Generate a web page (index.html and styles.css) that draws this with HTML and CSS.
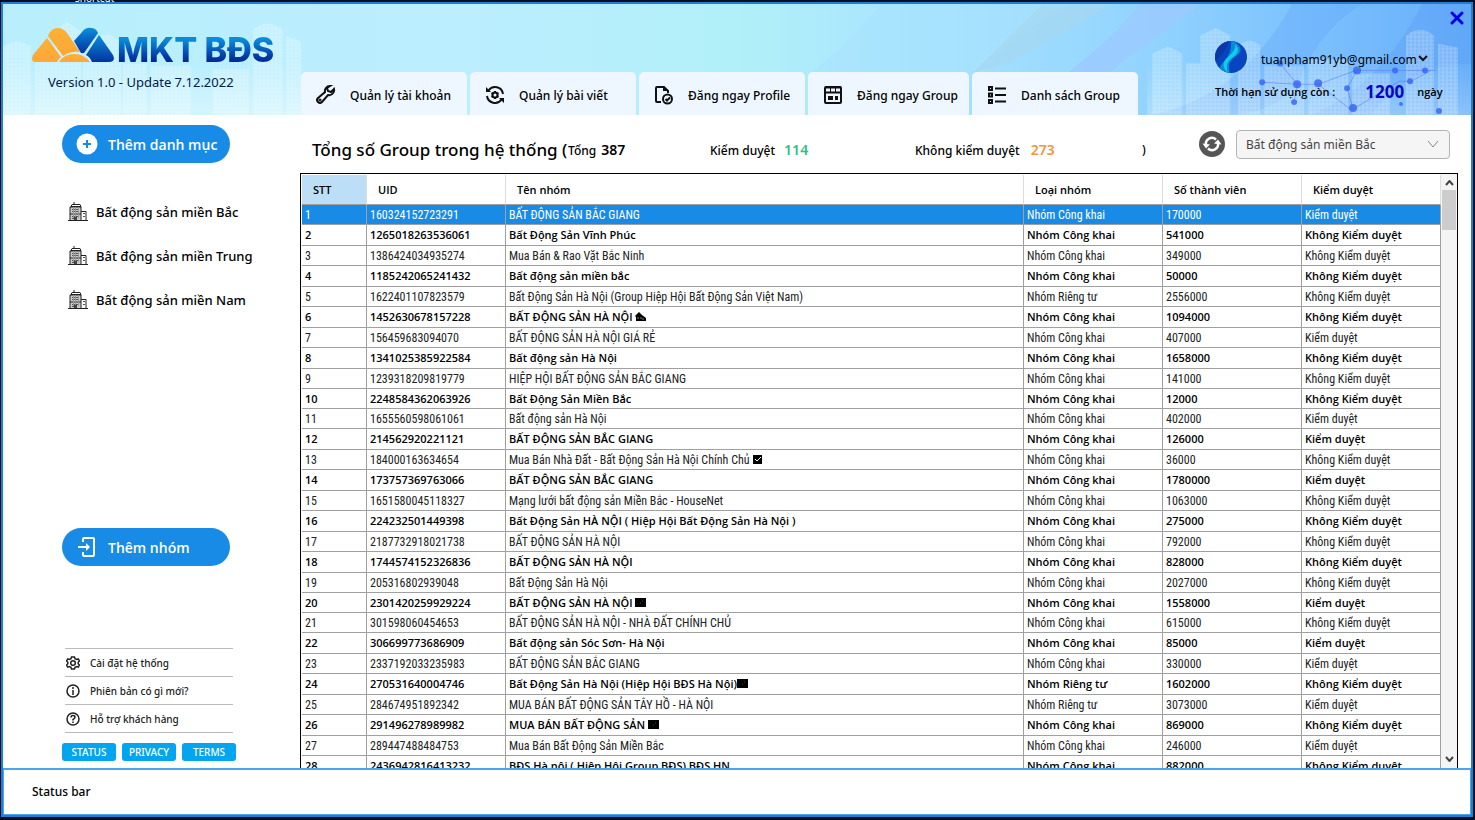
FILE: index.html
```html
<!DOCTYPE html>
<html lang="vi">
<head>
    <meta charset="UTF-8">
    <meta name="viewport" content="width=device-width, initial-scale=1.0">
    <title>MKT BĐS</title>
    <link rel="stylesheet" href="styles.css">
</head>
<body>
    <div class="desktop_label">shortcut</div>

    <div class="window">
        <!-- header -->
        <header class="header">
            <svg class="header_back" viewBox="0 0 1469 112" preserveAspectRatio="none" aria-hidden="true">
                <defs>
                    <linearGradient id="sky"><stop offset="0" stop-color="#b9effd"/><stop offset=".32" stop-color="#bbeeff"/><stop offset=".5" stop-color="#b1f0f8"/><stop offset=".62" stop-color="#a9e4ff"/><stop offset=".78" stop-color="#92d4ff"/><stop offset="1" stop-color="#66aefa"/></linearGradient>
                    <pattern id="floors" width="4" height="4" patternUnits="userSpaceOnUse"><rect width="4" height="4" fill="#fff" opacity=".25"/><path d="M0 1h4M1 0v4" stroke="#fff" opacity=".5"/></pattern>
                    <linearGradient id="mist" x2="0" y2="1"><stop offset="0" stop-color="#fff" stop-opacity="0"/><stop offset="1" stop-color="#fff" stop-opacity=".4"/></linearGradient>
                </defs>
                <rect width="1469" height="112" fill="url(#sky)"/>
                <path d="M880 0 835 48l-25 20v44h140q50-80 120-112z" fill="#a8e2fd" opacity=".6"/>
                <path d="M1040 0h70L1010 58l-40 12z" fill="#a5d7f0" opacity=".7"/>
                <path d="M1138 0h60l-80 60-60 52h-40l50-45q40-30 70-67z" fill="#9cc9ff" opacity=".8"/>
                <path d="M1290 0h70q-40 25-60 70t-90 42h-60q90-20 140-112z" fill="#5f9ffc" opacity=".28"/>
                <path d="M1420 0h49v60q-60 0-100 52h-60q70-30 111-112z" fill="#5799f6" opacity=".3"/>
                <g fill="url(#floors)" opacity=".55">
                    <path d="M0 112V42l15-5 13 5v70zM32 112V54h18V28l14-10 14 10v84zM80 112V50h10V36l16-6 12 8v74zM120 112V60h24v52zM148 112V62h40v50zM210 112V66h36v46zM250 112V26q14-12 30 0v86zM283 112V32l15 6v74z"/>
                    <path d="M1150 112V50l16-7 14 7v62zM1184 112V60h14V32l16-8 14 8v80zM1236 112V42q12-10 22 0v70zM1262 112V62h40v50zM1306 112V56h40v56zM1350 112V70h38v42zM1404 112V32q14-12 28 0v80zM1436 112V40l20 4v68z"/>
                </g>
                <rect y="60" width="300" height="52" fill="url(#mist)"/>
                <rect x="1145" y="60" width="324" height="52" fill="url(#mist)" opacity=".6"/>
                <g stroke="#5a6cf0" stroke-width="1" opacity=".5" fill="none"><path d="m1260 79 35 2 21 0 38-14 38 0 42 0M1278 60l17 21-3 18M1355 67l-10 18 6 21 46-28 12 0 20-11M1316 81l32 25"/></g>
                <g fill="#3563f2" opacity=".8"><circle cx="1260" cy="79" r="3"/><circle cx="1278" cy="60" r="3"/><circle cx="1295" cy="81" r="4"/><circle cx="1292" cy="99" r="3"/><circle cx="1316" cy="80" r="4"/><circle cx="1355" cy="67" r="4"/><circle cx="1345" cy="85" r="3"/><circle cx="1351" cy="105" r="4"/><circle cx="1393" cy="67" r="3"/><circle cx="1423" cy="67" r="3"/><circle cx="1408" cy="78" r="3"/><circle cx="1399" cy="101" r="2"/><circle cx="1437" cy="108" r="3"/></g>
            </svg>

            <div class="brand">
                <div class="logo">
                    <svg width="84" height="36" viewBox="0 0 84 36" aria-hidden="true">
                        <defs>
                            <linearGradient id="orange" x2="0" y2="1"><stop offset="0" stop-color="#f9b233"/><stop offset="1" stop-color="#ffa63a"/></linearGradient>
                            <linearGradient id="blue" x2="0" y2="1"><stop offset="0" stop-color="#0c8fdb"/><stop offset="1" stop-color="#0233a0"/></linearGradient>
                        </defs>
                        <path d="M16 11 2 28q-3 7 3 7h21q1-3 4-5z" fill="url(#orange)"/>
                        <path d="M17 9q3-8 10-8 5 0 9 5l13 19q-9-1-17 4z" fill="url(#orange)"/>
                        <path d="M28 35q5-8 15-8t16 8z" fill="url(#orange)"/>
                        <path d="M43 14 51 5q4-5 9-4 5 0 7 5L53 26h-3z" fill="url(#blue)"/>
                        <path d="m68 8 14 20q3 7-4 7H61q-2-5-6-7z" fill="url(#blue)"/>
                    </svg>
                    <span class="logo_text">MKT BĐS</span>
                </div>
                <p class="version">Version 1.0 - Update 7.12.2022</p>
            </div>

            <nav class="tabs">
                <a class="tab" href="#">
                    <svg class="icon20" viewBox="0 0 20 20"><path d="M14 2a5 5 0 0 0-5 6L2 14a2.600 2.600 0 0 0 4 4l6-7a5 5 0 0 0 6-6l-3 3-3-1-1-3z" transform="translate(0 -1)"/><circle cx="4" cy="15" r=".6"/></svg>
                    Quản lý tài khoản
                </a>
                <a class="tab" href="#">
                    <svg class="icon20" viewBox="0 0 20 20"><path d="M3.500 5.500a8 8 0 0 1 14.500 3.500M16.500 14.500a8 8 0 0 1-14.500-3.500"/><path d="M1 2v5h5zM19 18v-5h-5z" fill="#111" stroke="none"/><circle cx="10" cy="10" r="2.500"/><path d="M10 6v1M10 13v1M6.500 8l1 .5M12.500 11.500l1 .5M6.500 12l1-.5M12.500 8.500l1-.5"/></svg>
                    Quản lý bài viết
                </a>
                <a class="tab" href="#">
                    <svg class="icon20" viewBox="0 0 20 20"><path d="M7 17H3q-1 0-1-1V3q0-1 1-1h7l4 4v2"/><path d="M9 1v5h6z" fill="#111" stroke="none"/><circle cx="13.500" cy="14" r="4.500"/><path d="m11.500 14 1.500 1.500 3-3"/></svg>
                    Đăng ngay Profile
                </a>
                <a class="tab" href="#">
                    <svg class="icon20" viewBox="0 0 20 20"><rect x="2" y="2" width="16" height="16" rx="1"/><path d="M2 7.500h16M2 2.500h16"/><path d="M7.500 3v4M12.500 3v4" stroke-width="1"/><path d="M5 11h5v4H5zM12 11h3v4h-3z" fill="#111" stroke="none"/></svg>
                    Đăng ngay Group
                </a>
                <a class="tab" href="#">
                    <svg class="icon20" viewBox="0 0 20 20"><path d="M2 2h3v3H2zM2 8.500h3v3H2zM2 15h3v3H2zM8 3.500h11M8 10h11M8 16.500h11"/></svg>
                    Danh sách Group
                </a>
            </nav>

            <div class="account">
                <button class="close" aria-label="Close">
                    <svg width="16" height="16" viewBox="0 0 16 16"><path d="m3 3 10 10M13 3 3 13" stroke="#0202e6" stroke-width="3" stroke-linecap="round"/></svg>
                </button>
                <div class="user">
                    <svg width="32" height="32" viewBox="0 0 32 32" aria-hidden="true">
                        <defs><clipPath id="round"><circle cx="16" cy="16" r="16"/></clipPath></defs>
                        <g clip-path="url(#round)"><path d="M0 0h32v32H0z" fill="#0645bd"/><path d="M16-2q16 10 5 17t-5 19H4q-1-8 6-15t6-21z" fill="#078ad7"/><path d="M20 3q7 7-2 13t-5 16q-9-8 0-16T20 3z" fill="#10ccea"/><path d="M0 0h14q-4 10-8 14t-6 8z" fill="#0b37a8"/></g>
                    </svg>
                    <button class="email">tuanpham91yb@gmail.com<svg width="12" height="8" viewBox="0 0 12 8"><path d="m2 1 4 4 4-4" fill="none" stroke="#111" stroke-width="2"/></svg></button>
                </div>
                <p class="expiry"><span>Thời hạn sử dụng còn :</span><b>1200</b><span>ngày</span></p>
            </div>
        </header>

        <div class="main">
            <!-- sidebar -->
            <aside class="sidebar">
                <button class="pill">
                    <svg width="22" height="22" viewBox="0 0 22 22"><circle cx="11" cy="11" r="10.500" fill="#fff"/><path d="M11 7v8M7 11h8" stroke="#188be6" stroke-width="2"/></svg>
                    Thêm danh mục
                </button>
                <svg class="symbols" aria-hidden="true">
                    <symbol id="building" viewBox="0 0 20 20"><path d="M2 4h11v14H2z" fill="#ccc"/><path d="M2 18V5h11v13M3 4.500l1-2h8l1 2zM6 3V0M13 9.500h5V18M0 18.500h20" fill="none" stroke="#222"/><path d="M4 7.500h7M4 9.500h7M4 14.500h7M4 16.500h2M15 11.500h2M15 14.500h2" stroke="#555"/><path d="M2 12h11" stroke="#222"/><path d="M5.500 5v11M7.500 5v11M10.500 5v11" stroke="#999"/><path d="M6 15h3v3H6z" fill="#444"/></symbol>
                </svg>
                <ul class="areas">
                    <li><a href="#"><svg width="20" height="20"><use href="#building"/></svg>Bất động sản miền Bắc</a></li>
                    <li><a href="#"><svg width="20" height="20"><use href="#building"/></svg>Bất động sản miền Trung</a></li>
                    <li><a href="#"><svg width="20" height="20"><use href="#building"/></svg>Bất động sản miền Nam</a></li>
                </ul>
                <button class="pill add_group">
                    <svg width="22" height="22" viewBox="0 0 22 22"><path d="M7 6V3q0-1 1-1h9q1 0 1 1v16q0 1-1 1H8q-1 0-1-1v-3M2 11h11" fill="none" stroke="#fff" stroke-width="2"/><path d="m10 7 4 4-4 4z" fill="#fff"/></svg>
                    Thêm nhóm
                </button>
                <ul class="links">
                    <li><a href="#"><svg width="14" height="14" viewBox="0 0 14 14"><path d="m5.500 1-.5 1.700-1.700.8-1.600-.5L.6 5l1.200 1.200v1.600L.6 9l1.100 2 1.600-.5 1.700.8.5 1.700h3l.5-1.700 1.700-.8 1.600.5 1.100-2-1.200-1.200V6.200L13.400 5l-1.100-2-1.600.5L9 2.700 8.500 1z"/><circle cx="7" cy="7" r="2.300"/></svg>Cài đặt hệ thống</a></li>
                    <li><a href="#"><svg width="14" height="14" viewBox="0 0 14 14"><circle cx="7" cy="7" r="6"/><path d="M7 6v5M7 3v2"/></svg>Phiên bản có gì mới?</a></li>
                    <li><a href="#"><svg width="14" height="14" viewBox="0 0 14 14"><circle cx="7" cy="7" r="6"/><path d="M5 5.500q0-2 2-2t2 1.700Q9 6.500 7 7.500v1M7 9.500v1.500"/></svg>Hỗ trợ khách hàng</a></li>
                </ul>
                <div class="badges">
                    <button>STATUS</button>
                    <button>PRIVACY</button>
                    <button>TERMS</button>
                </div>
            </aside>

            <!-- group list -->
            <section class="content">
                <div class="summary">
                    <h1>Tổng số Group trong hệ thống (</h1>
                    <p class="total">Tổng <b>387</b></p>
                    <p class="approve">Kiểm duyệt <b class="green">114</b></p>
                    <p class="no_approve">Không kiểm duyệt <b class="orange">273</b></p>
                    <p class="paren">)</p>
                    <button class="reload" aria-label="Reload">
                        <svg width="26" height="26" viewBox="0 0 26 26"><circle cx="13" cy="13" r="13" fill="#555"/><path d="M7 14a6 6 0 0 1 10-5.500M19 12a6 6 0 0 1-10 5.500" fill="none" stroke="#fff" stroke-width="2.500"/><path d="m3.500 12.500 3.500 5 4-4zM22.500 13.500 19 8.500l-4 4z" fill="#fff"/></svg>
                    </button>
                    <div class="select_box">
                        <select aria-label="Danh mục">
                            <option>Bất động sản miền Bắc</option>
                            <option>Bất động sản miền Trung</option>
                            <option>Bất động sản miền Nam</option>
                        </select>
                        <svg width="12" height="8" viewBox="0 0 12 8"><path d="m1 1 5 6 5-6" fill="none" stroke="#888"/></svg>
                    </div>
                </div>

                <div class="grid">
                    <div class="grid_body">
                        <table>
                            <colgroup><col class="c_stt"><col class="c_mid"><col><col class="c_mid"><col class="c_mid"><col class="c_mid"></colgroup>
                            <thead>
                                <tr><th>STT</th><th>UID</th><th>Tên nhóm</th><th>Loại nhóm</th><th>Số thành viên</th><th>Kiểm duyệt</th></tr>
                            </thead>
                            <tbody>
                                <tr class="selected"><td>1</td><td>160324152723291</td><td>BẤT ĐỘNG SẢN BẮC GIANG</td><td>Nhóm Công khai</td><td>170000</td><td>Kiểm duyệt</td></tr>
                                <tr><td>2</td><td>1265018263536061</td><td>Bất Động Sản Vĩnh Phúc</td><td>Nhóm Công khai</td><td>541000</td><td>Không Kiểm duyệt</td></tr>
                                <tr><td>3</td><td>1386424034935274</td><td>Mua Bán &amp; Rao Vặt Bắc Ninh</td><td>Nhóm Công khai</td><td>349000</td><td>Không Kiểm duyệt</td></tr>
                                <tr><td>4</td><td>1185242065241432</td><td>Bất động sản miền bắc</td><td>Nhóm Công khai</td><td>50000</td><td>Không Kiểm duyệt</td></tr>
                                <tr><td>5</td><td>1622401107823579</td><td>Bất Động Sản Hà Nội (Group Hiệp Hội Bất Động Sản Việt Nam)</td><td>Nhóm Riêng tư</td><td>2556000</td><td>Không Kiểm duyệt</td></tr>
                                <tr><td>6</td><td>1452630678157228</td><td>BẤT ĐỘNG SẢN HÀ NỘI <svg class="mark" viewBox="0 0 11 9"><path d="M0 4 4 0l3 3 4 3v3H1V5z"/><path d="M3 5v2M6 5v2M8 6v2" stroke="#fff" stroke-width=".5"/></svg></td><td>Nhóm Công khai</td><td>1094000</td><td>Không Kiểm duyệt</td></tr>
                                <tr><td>7</td><td>156459683094070</td><td>BẤT ĐỘNG SẢN HÀ NỘI GIÁ RẺ</td><td>Nhóm Công khai</td><td>407000</td><td>Kiểm duyệt</td></tr>
                                <tr><td>8</td><td>1341025385922584</td><td>Bất động sản Hà Nội</td><td>Nhóm Công khai</td><td>1658000</td><td>Không Kiểm duyệt</td></tr>
                                <tr><td>9</td><td>1239318209819779</td><td>HIỆP HỘI BẤT ĐỘNG SẢN BẮC GIANG</td><td>Nhóm Công khai</td><td>141000</td><td>Không Kiểm duyệt</td></tr>
                                <tr><td>10</td><td>2248584362063926</td><td>Bất Động Sản Miền Bắc</td><td>Nhóm Công khai</td><td>12000</td><td>Không Kiểm duyệt</td></tr>
                                <tr><td>11</td><td>1655560598061061</td><td>Bất động sản Hà Nội</td><td>Nhóm Công khai</td><td>402000</td><td>Kiểm duyệt</td></tr>
                                <tr><td>12</td><td>214562920221121</td><td>BẤT ĐỘNG SẢN BẮC GIANG</td><td>Nhóm Công khai</td><td>126000</td><td>Kiểm duyệt</td></tr>
                                <tr><td>13</td><td>184000163634654</td><td>Mua Bán Nhà Đất - Bất Động Sản Hà Nội Chính Chủ <svg class="mark" viewBox="0 0 11 9"><path d="M1 0h9v9H1z"/><path d="m3 4 2 2 4-4" fill="none" stroke="#fff"/></svg></td><td>Nhóm Công khai</td><td>36000</td><td>Không Kiểm duyệt</td></tr>
                                <tr><td>14</td><td>173757369763066</td><td>BẤT ĐỘNG SẢN BẮC GIANG</td><td>Nhóm Công khai</td><td>1780000</td><td>Kiểm duyệt</td></tr>
                                <tr><td>15</td><td>1651580045118327</td><td>Mạng lưới bất động sản Miền Bắc - HouseNet</td><td>Nhóm Công khai</td><td>1063000</td><td>Không Kiểm duyệt</td></tr>
                                <tr><td>16</td><td>224232501449398</td><td>Bất Động Sản HÀ NỘI ( Hiệp Hội Bất Động Sản Hà Nội )</td><td>Nhóm Công khai</td><td>275000</td><td>Không Kiểm duyệt</td></tr>
                                <tr><td>17</td><td>2187732918021738</td><td>BẤT ĐỘNG SẢN HÀ NỘI</td><td>Nhóm Công khai</td><td>792000</td><td>Không Kiểm duyệt</td></tr>
                                <tr><td>18</td><td>1744574152326836</td><td>BẤT ĐỘNG SẢN HÀ NỘI</td><td>Nhóm Công khai</td><td>828000</td><td>Không Kiểm duyệt</td></tr>
                                <tr><td>19</td><td>205316802939048</td><td>Bất Động Sản Hà Nội</td><td>Nhóm Công khai</td><td>2027000</td><td>Không Kiểm duyệt</td></tr>
                                <tr><td>20</td><td>2301420259929224</td><td>BẤT ĐỘNG SẢN HÀ NỘI <svg class="mark" viewBox="0 0 11 9"><path d="M0 0h11v9H0z"/><path d="M5 5h1M7 3h1" stroke="#444"/></svg></td><td>Nhóm Công khai</td><td>1558000</td><td>Kiểm duyệt</td></tr>
                                <tr><td>21</td><td>301598060454653</td><td>BẤT ĐỘNG SẢN HÀ NỘI - NHÀ ĐẤT CHÍNH CHỦ</td><td>Nhóm Công khai</td><td>615000</td><td>Không Kiểm duyệt</td></tr>
                                <tr><td>22</td><td>306699773686909</td><td>Bất động sản Sóc Sơn- Hà Nội</td><td>Nhóm Công khai</td><td>85000</td><td>Kiểm duyệt</td></tr>
                                <tr><td>23</td><td>2337192033235983</td><td>BẤT ĐỘNG SẢN BẮC GIANG</td><td>Nhóm Công khai</td><td>330000</td><td>Kiểm duyệt</td></tr>
                                <tr><td>24</td><td>270531640004746</td><td>Bất Động Sản Hà Nội (Hiệp Hội BĐS Hà Nội)<svg class="mark" viewBox="0 0 11 9"><path d="M0 0h11v9H0z"/><path d="M5 5h1M7 3h1" stroke="#444"/></svg></td><td>Nhóm Riêng tư</td><td>1602000</td><td>Không Kiểm duyệt</td></tr>
                                <tr><td>25</td><td>284674951892342</td><td>MUA BÁN BẤT ĐỘNG SẢN TÂY HỒ - HÀ NỘI</td><td>Nhóm Riêng tư</td><td>3073000</td><td>Kiểm duyệt</td></tr>
                                <tr><td>26</td><td>291496278989982</td><td>MUA BÁN BẤT ĐỘNG SẢN <svg class="mark" viewBox="0 0 11 9"><path d="M0 0h11v9H0z"/><path d="M5 5h1M7 3h1" stroke="#444"/></svg></td><td>Nhóm Công khai</td><td>869000</td><td>Không Kiểm duyệt</td></tr>
                                <tr><td>27</td><td>289447488484753</td><td>Mua Bán Bất Động Sản Miền Bắc</td><td>Nhóm Công khai</td><td>246000</td><td>Kiểm duyệt</td></tr>
                                <tr><td>28</td><td>2436942816413232</td><td>BĐS Hà nội ( Hiệp Hội Group BĐS) BĐS HN</td><td>Nhóm Công khai</td><td>882000</td><td>Không Kiểm duyệt</td></tr>
                            </tbody>
                        </table>
                    </div>
                    <div class="scrollbar">
                        <svg width="9" height="6" viewBox="0 0 9 6"><path d="m1 5 3.500-4L8 5" fill="none" stroke="#444" stroke-width="2"/></svg>
                        <div class="thumb"></div>
                        <svg width="9" height="6" viewBox="0 0 9 6"><path d="m1 1 3.500 4L8 1" fill="none" stroke="#444" stroke-width="2"/></svg>
                    </div>
                </div>
            </section>
        </div>

        <footer class="status_bar">Status bar</footer>
    </div>
</body>
</html>
```
FILE: styles.css
```css
*{margin:0;padding:0;box-sizing:border-box;}
html,body{height:100%;}
body{
    display:flex;
    flex-direction:column;
    background:#020d26;
    font-family:"Noto Sans","Open Sans",sans-serif;
    font-size:13px;
    color:#000;
    overflow:hidden;
}
button{border:0;background:none;font:inherit;color:inherit;cursor:pointer;}
a{color:inherit;text-decoration:none;}
ul{list-style:none;}

/* desktop label that shows above the window */
.desktop_label{height:2px;padding-left:75px;display:flex;align-items:flex-end;overflow:hidden;font-size:10px;line-height:8px;color:#fff;}

.window{
    flex:1;
    min-height:0;
    margin:0 2px 3px 1px;
    border:2px solid #1f7fd0;
    background:#fff;
    display:flex;
    flex-direction:column;
}

/* header */
.header{position:relative;height:111px;flex:none;display:flex;}
.header_back{position:absolute;top:0;left:0;width:100%;height:100%;}
.brand,.tabs,.account{position:relative;}
.brand{width:298px;padding:21px 0 0 28px;}
.logo{display:flex;align-items:flex-end;gap:2px;height:38px;}
.logo_text{
    font-family:"Inter","Noto Sans",sans-serif;
    font-size:34px;font-weight:800;line-height:26px;
    background:linear-gradient(#0a8bd8 10%,#022a9c 90%);
    -webkit-background-clip:text;background-clip:text;color:transparent;
    white-space:nowrap;
}
.version{padding:10px 0 0 17px;font-size:13px;line-height:18px;color:#04204a;}

.tabs{display:flex;align-items:flex-end;gap:3px;}
.tab{
    width:166px;height:43px;padding:3px 0 0 15px;
    display:flex;align-items:center;gap:14px;
    background:#eef7ff;border-radius:5px 5px 0 0;
    font-size:12px;font-weight:500;white-space:nowrap;
}
.tab:nth-child(4){width:161px;}
.icon20{width:20px;height:20px;flex:none;fill:none;stroke:#111;stroke-width:2;}

.account{flex:1;padding:37px 0 0 77px;}
.close{position:absolute;top:6px;right:6px;height:16px;}
.user{display:flex;align-items:center;gap:14px;height:32px;}
.email{display:flex;align-items:center;font-size:12px;font-weight:400;padding-top:4px;}
.expiry{display:flex;align-items:center;height:36px;font-family:"Open Sans",sans-serif;font-size:11px;font-weight:600;white-space:nowrap;}
.expiry b{margin:0 13px 0 30px;font-size:17px;font-weight:700;color:#0606c0;}

/* body */
.main{flex:1;min-height:0;display:flex;}
.sidebar{width:297px;padding:10px 0 7px 59px;display:flex;flex-direction:column;align-items:flex-start;}
.symbols{position:absolute;width:0;height:0;}
.pill{
    width:168px;height:38px;padding-left:14px;
    display:flex;align-items:center;gap:10px;
    border-radius:19px;background:#188be6;color:#fff;
    font-family:"Open Sans",sans-serif;font-size:14px;font-weight:600;white-space:nowrap;
}
.areas{padding:27px 0 0 6px;font-size:13px;font-weight:500;}
.areas a{height:44px;display:flex;align-items:center;gap:8px;}
.add_group{margin-top:206px;}
.links{margin:auto 0 10px 3px;width:168px;border-top:1px solid #bbb;font-size:10px;font-weight:500;color:#222;}
.links a{height:28px;border-bottom:1px solid #bbb;display:flex;align-items:center;gap:10px;}
.links svg{margin-left:1px;fill:none;stroke:#222;stroke-width:1.5;}
.badges{display:flex;gap:6px;}
.badges button{width:54px;height:18px;border-radius:3px;background:#03a5ee;color:#fff;font-size:10px;font-weight:500;}

.content{flex:1;min-width:0;padding-right:13px;display:flex;flex-direction:column;}
.summary{height:58px;padding:0 8px 0 12px;display:flex;align-items:center;font-size:12px;font-weight:500;white-space:nowrap;}
.summary p,.summary h1{padding-top:11px;}
.summary h1{width:252px;font-size:17px;font-weight:500;}
.summary b{font-size:14px;font-weight:600;}
.total{width:146px;padding-left:4px;}
.total b{margin-left:2px;}
.approve{width:205px;}
.approve b{margin-left:6px;}
.no_approve{width:227px;}
.no_approve b{margin-left:8px;}
.green{color:#2dc182;}
.orange{color:#f8943f;}
.reload{margin-left:auto;height:26px;}
.select_box{position:relative;width:214px;height:29px;margin-left:11px;}
.select_box select{
    width:100%;height:100%;padding-left:9px;
    appearance:none;border:1px solid #b4b4b4;border-radius:4px;background:#f5f5f5;
    font:12px "Noto Sans",sans-serif;color:#444;
}
.select_box svg{position:absolute;right:11px;top:10px;}

/* table */
.grid{flex:1;min-height:0;display:flex;border:solid #000;border-width:1px 1px 0 1px;overflow:hidden;}
.grid_body{flex:1;min-width:0;padding:1px 0 0 1px;overflow:hidden;}
table{width:100%;table-layout:fixed;border-collapse:separate;border-spacing:0;}
.c_stt{width:65px;}
.c_mid{width:139px;}
th,td{border-right:1px solid #a0a0a0;border-bottom:1px solid #a0a0a0;text-align:left;white-space:nowrap;overflow:hidden;}
th{height:30px;padding:0 0 1px 11px;border-right-color:#ddd;font-family:"Open Sans",sans-serif;font-size:11px;font-weight:600;}
th:first-child{background:#bcdff7;}
td{height:20px;padding-left:3px;line-height:14px;font-family:"Liberation Sans Narrow","Roboto Condensed","Roboto",sans-serif;font-size:12px;color:#222;}
tr:nth-child(even) td{height:21px;font-family:"Open Sans",sans-serif;font-size:11px;font-weight:600;color:#000;}
tr:nth-child(10n) td{height:20px;}
tbody .selected td{background:#188be6;color:#fff;}
.mark{width:11px;height:9px;}

.scrollbar{width:16px;padding:6px 1px;background:#f4f4f4;display:flex;flex-direction:column;align-items:center;}
.thumb{width:14px;height:40px;margin:4px 0 auto;background:#cdcdcd;}

.status_bar{height:47px;flex:none;padding-left:28px;border:2px solid #4ba5ee;border-width:2px 1px 1px;line-height:44px;font-size:12px;font-weight:500;}
```
